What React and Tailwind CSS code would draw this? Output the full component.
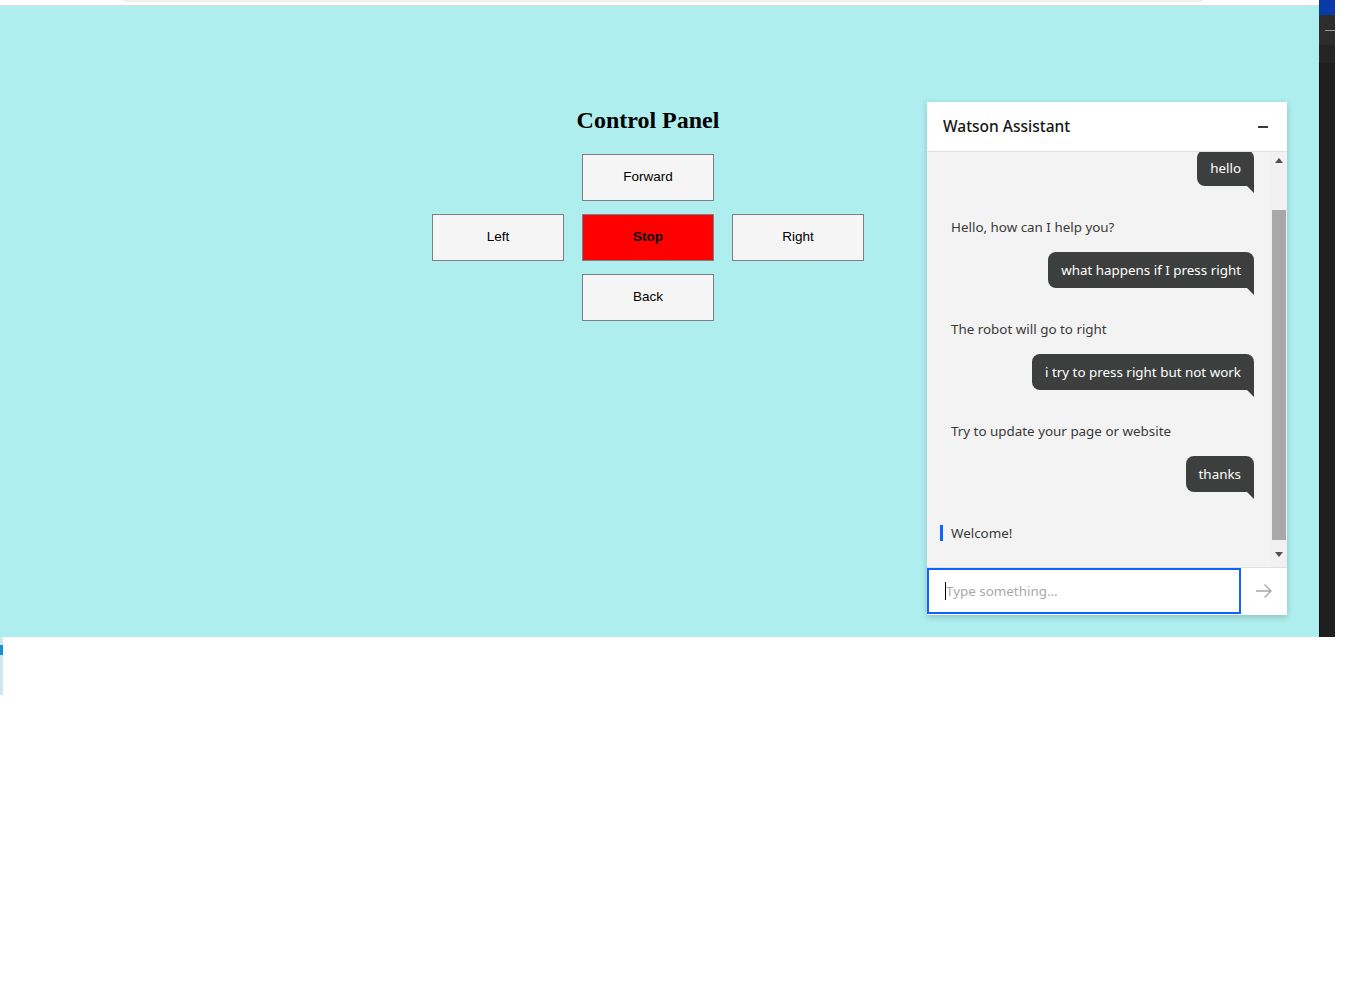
import React from "react";

const plex = { fontFamily: '"Noto Sans", "Open Sans", sans-serif' };

function Tail() {
  return (
    <svg className="absolute right-0 top-full" width="7" height="7" viewBox="0 0 7 7">
      <polygon points="0,0 7,0 7,7" fill="#3d3f3f" />
    </svg>
  );
}

function UserMsg({ text, className = "" }) {
  return (
    <div className={"flex justify-end " + className}>
      <div className="relative bg-[#3d3f3f] text-white text-[13.4px] leading-[20px] h-[36px] px-[13px] flex items-center rounded-t-[8px] rounded-bl-[8px]">
        {text}
        <Tail />
      </div>
    </div>
  );
}

function BotMsg({ text }) {
  return (
    <div className="text-[#393939] text-[13.4px] leading-[20px] h-[20px] mt-[31px] mb-[15px]">{text}</div>
  );
}

function CtlButton({ label, red }) {
  return (
    <button
      className={
        "w-[132px] h-[47px] border border-[#808080] text-[13.5px] text-black " +
        (red ? "bg-[#ff0000] font-bold" : "bg-[#f5f5f5]")
      }
      style={{ fontFamily: '"Liberation Sans", Arial, sans-serif' }}
    >
      {label}
    </button>
  );
}

export default function App() {
  return (
    <div className="w-[1366px] h-[1000px] bg-white flex flex-col">
      <div className="flex">
        <div className="w-[1319px] flex flex-col">
          <div className="h-[6px] bg-white border-b border-[#dcdcdc] pl-[123px]">
            <div className="w-[1080px] h-[2px] bg-[#efefef] rounded-b"></div>
          </div>
          <div className="h-[631px] bg-[#afeeee] flex">
            {/* control panel */}
            <div className="ml-[432px] w-[432px] flex flex-col items-center">
              <h1
                className="text-[24px] leading-[28px] font-bold text-black mt-[100px]"
                style={{ fontFamily: '"Liberation Serif", "Times New Roman", serif' }}
              >
                Control Panel
              </h1>
              <div className="mt-[20px] flex flex-col items-center gap-[13px]">
                <CtlButton label="Forward" />
                <div className="flex gap-[18px]">
                  <CtlButton label="Left" />
                  <CtlButton label="Stop" red />
                  <CtlButton label="Right" />
                </div>
                <CtlButton label="Back" />
              </div>
            </div>
            {/* chat widget */}
            <div
              className="ml-[63px] mt-[96px] w-[360px] h-[513px] bg-white flex flex-col shadow-[0_2px_6px_rgba(0,0,0,0.2)]"
              style={plex}
            >
              <div className="h-[50px] border-b border-[#e0e0e0] flex items-center justify-between pl-[16px] pr-[19px] pt-[1px]">
                <span className="text-[15.5px] text-[#161616] font-medium">Watson Assistant</span>
                <div className="w-[10px] h-[2px] bg-[#393939]"></div>
              </div>
              <div className="h-[416px] bg-[#f3f3f3] flex border-b border-[#e0e0e0]">
                <div className="flex-1 pl-[24px] pr-[16px] overflow-hidden flex flex-col">
                  <UserMsg text="hello" className="-mt-[2px]" />
                  <BotMsg text="Hello, how can I help you?" />
                  <UserMsg text="what happens if I press right" />
                  <BotMsg text="The robot will go to right" />
                  <UserMsg text="i try to press right but not work" />
                  <BotMsg text="Try to update your page or website" />
                  <UserMsg text="thanks" />
                  <div className="mt-[31px] flex items-center text-[13.4px] leading-[20px] text-[#393939] -ml-[11px]">
                    <div className="w-[3px] h-[16px] bg-[#0f62fe] mr-[8px]"></div>
                    Welcome!
                  </div>
                </div>
                <div className="w-[17px] bg-[#f1f1f1] flex flex-col items-center">
                  <svg className="mt-[6px]" width="8" height="5" viewBox="0 0 8 5">
                    <polygon points="0,5 8,5 4,0" fill="#505050" />
                  </svg>
                  <div className="w-[14px] h-[330px] bg-[#a8a8a8] mt-[47px]"></div>
                  <svg className="mt-[12px]" width="8" height="5" viewBox="0 0 8 5">
                    <polygon points="0,0 8,0 4,5" fill="#505050" />
                  </svg>
                </div>
              </div>
              <div className="flex h-[46px]">
                <div className="w-[314px] h-[46px] border-2 border-[#0f62fe] flex items-center pl-[16px]">
                  <div className="w-[1px] h-[18px] bg-black"></div>
                  <span className="text-[13.4px] text-[#a8a8a8]">Type something...</span>
                </div>
                <div className="flex-1 flex items-center justify-center">
                  <svg width="18" height="16" viewBox="0 0 18 16" fill="none" stroke="#a8a8a8" strokeWidth="1.4">
                    <path d="M1 8h15M9.5 1.5L16 8l-6.5 6.5" />
                  </svg>
                </div>
              </div>
            </div>
          </div>
        </div>
        <div className="w-[16px] h-[637px] bg-[#1f1f1f] flex flex-col">
          <div className="h-[15px] bg-[#0a3aa8]"></div>
          <div className="h-[30px] bg-[#2d2d2d] flex items-center justify-end">
            <div className="w-[10px] h-[1px] bg-[#9a9a9a]"></div>
          </div>
          <div className="h-[18px] bg-[#252525]"></div>
          <div className="flex-1 border-l border-[#111]"></div>
        </div>
      </div>
      <div className="w-[3px] h-[58px] bg-[#cfe8f0] flex flex-col">
        <div className="h-[10px] mt-[8px] bg-[#1a8fd0]"></div>
      </div>
    </div>
  );
}
